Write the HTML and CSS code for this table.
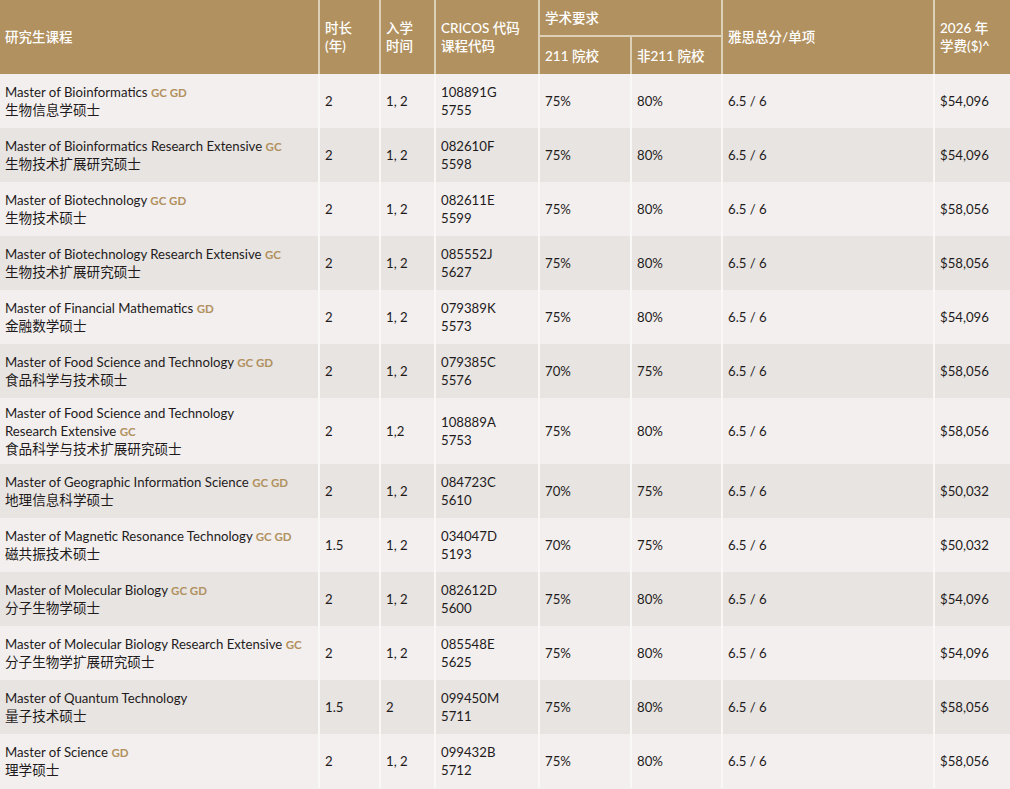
FILE: index.html
```html
<!DOCTYPE html>
<html lang="zh">
<head>
<meta charset="utf-8">
<link rel="stylesheet" href="styles.css">
</head>
<body>
<table class="courses">
  <colgroup>
    <col class="c-name"><col class="c-dur"><col class="c-intake"><col class="c-code">
    <col class="c-211"><col class="c-non211"><col class="c-ielts"><col class="c-fee">
  </colgroup>
  <thead>
    <tr>
      <th rowspan="2">研究生课程</th>
      <th rowspan="2">时长<br>(年)</th>
      <th rowspan="2">入学<br>时间</th>
      <th rowspan="2">CRICOS 代码<br>课程代码</th>
      <th colspan="2" class="group">学术要求</th>
      <th rowspan="2">雅思总分/单项</th>
      <th rowspan="2">2026 年<br>学费($)^</th>
    </tr>
    <tr class="sub">
      <th>211 院校</th>
      <th>非211 院校</th>
    </tr>
  </thead>
  <tbody>
    <tr><td>Master of Bioinformatics <span class="tag">GC GD</span><br><span class="zh">生物信息学硕士</span></td><td>2</td><td>1, 2</td><td>108891G<br>5755</td><td>75%</td><td>80%</td><td>6.5 / 6</td><td>$54,096</td></tr>
    <tr><td>Master of Bioinformatics Research Extensive <span class="tag">GC</span><br><span class="zh">生物技术扩展研究硕士</span></td><td>2</td><td>1, 2</td><td>082610F<br>5598</td><td>75%</td><td>80%</td><td>6.5 / 6</td><td>$54,096</td></tr>
    <tr><td>Master of Biotechnology <span class="tag">GC GD</span><br><span class="zh">生物技术硕士</span></td><td>2</td><td>1, 2</td><td>082611E<br>5599</td><td>75%</td><td>80%</td><td>6.5 / 6</td><td>$58,056</td></tr>
    <tr><td>Master of Biotechnology Research Extensive <span class="tag">GC</span><br><span class="zh">生物技术扩展研究硕士</span></td><td>2</td><td>1, 2</td><td>085552J<br>5627</td><td>75%</td><td>80%</td><td>6.5 / 6</td><td>$58,056</td></tr>
    <tr><td>Master of Financial Mathematics <span class="tag">GD</span><br><span class="zh">金融数学硕士</span></td><td>2</td><td>1, 2</td><td>079389K<br>5573</td><td>75%</td><td>80%</td><td>6.5 / 6</td><td>$54,096</td></tr>
    <tr><td>Master of Food Science and Technology <span class="tag">GC GD</span><br><span class="zh">食品科学与技术硕士</span></td><td>2</td><td>1, 2</td><td>079385C<br>5576</td><td>70%</td><td>75%</td><td>6.5 / 6</td><td>$58,056</td></tr>
    <tr><td>Master of Food Science and Technology<br>Research Extensive <span class="tag">GC</span><br><span class="zh">食品科学与技术扩展研究硕士</span></td><td>2</td><td>1,2</td><td>108889A<br>5753</td><td>75%</td><td>80%</td><td>6.5 / 6</td><td>$58,056</td></tr>
    <tr><td>Master of Geographic Information Science <span class="tag">GC GD</span><br><span class="zh">地理信息科学硕士</span></td><td>2</td><td>1, 2</td><td>084723C<br>5610</td><td>70%</td><td>75%</td><td>6.5 / 6</td><td>$50,032</td></tr>
    <tr><td>Master of Magnetic Resonance Technology <span class="tag">GC GD</span><br><span class="zh">磁共振技术硕士</span></td><td>1.5</td><td>1, 2</td><td>034047D<br>5193</td><td>70%</td><td>75%</td><td>6.5 / 6</td><td>$50,032</td></tr>
    <tr><td>Master of Molecular Biology <span class="tag">GC GD</span><br><span class="zh">分子生物学硕士</span></td><td>2</td><td>1, 2</td><td>082612D<br>5600</td><td>75%</td><td>80%</td><td>6.5 / 6</td><td>$54,096</td></tr>
    <tr><td>Master of Molecular Biology Research Extensive <span class="tag">GC</span><br><span class="zh">分子生物学扩展研究硕士</span></td><td>2</td><td>1, 2</td><td>085548E<br>5625</td><td>75%</td><td>80%</td><td>6.5 / 6</td><td>$54,096</td></tr>
    <tr><td>Master of Quantum Technology<br><span class="zh">量子技术硕士</span></td><td>1.5</td><td>2</td><td>099450M<br>5711</td><td>75%</td><td>80%</td><td>6.5 / 6</td><td>$58,056</td></tr>
    <tr><td>Master of Science <span class="tag">GD</span><br><span class="zh">理学硕士</span></td><td>2</td><td>1, 2</td><td>099432B<br>5712</td><td>75%</td><td>80%</td><td>6.5 / 6</td><td>$58,056</td></tr>
  </tbody>
</table>
</body>
</html>
```

FILE: styles.css
```css
html, body {
  margin: 0;
  padding: 0;
  background: #f2efee;
}
body {
  font-family: "Lato", "Noto Sans CJK SC", sans-serif;
  font-size: 13.2px;
  line-height: 18px;
  color: #1f1b1c;
}
.courses {
  width: 1010px;
  border-collapse: collapse;
  table-layout: fixed;
}
.c-name { width: 319px; }
.c-dur { width: 61px; }
.c-intake { width: 55px; }
.c-code { width: 104px; }
.c-211 { width: 92px; }
.c-non211 { width: 91px; }
.c-ielts { width: 212px; }
.c-fee { width: 76px; }

.courses th {
  background: #b1915f;
  color: #ffffff;
  font-weight: 500;
  font-size: 13.5px;
  text-align: left;
  vertical-align: middle;
  padding: 0 5px;
  height: 36px;
  box-sizing: border-box;
  border-left: 2px solid #ddd0b8;
}
.courses thead tr:first-child th:first-child { border-left: none; }
.courses th.group {
  border-bottom: 2px solid #ddd0b8;
}
.courses tr.sub th { height: 38px; }

.courses td {
  height: 54px;
  padding: 6px 5px;
  box-sizing: border-box;
  vertical-align: middle;
  border-left: 2px solid #faf8f7;
}
.courses td:first-child { border-left: none; }
.courses tbody tr:nth-child(odd) td { background: #f2efee; }
.courses tbody tr:nth-child(even) td { background: #e7e4e1; }
.zh { font-size: 13.6px; }
.tag {
  color: #b1915f;
  font-weight: 700;
  font-size: 11.5px;
  line-height: 1;
}
```
